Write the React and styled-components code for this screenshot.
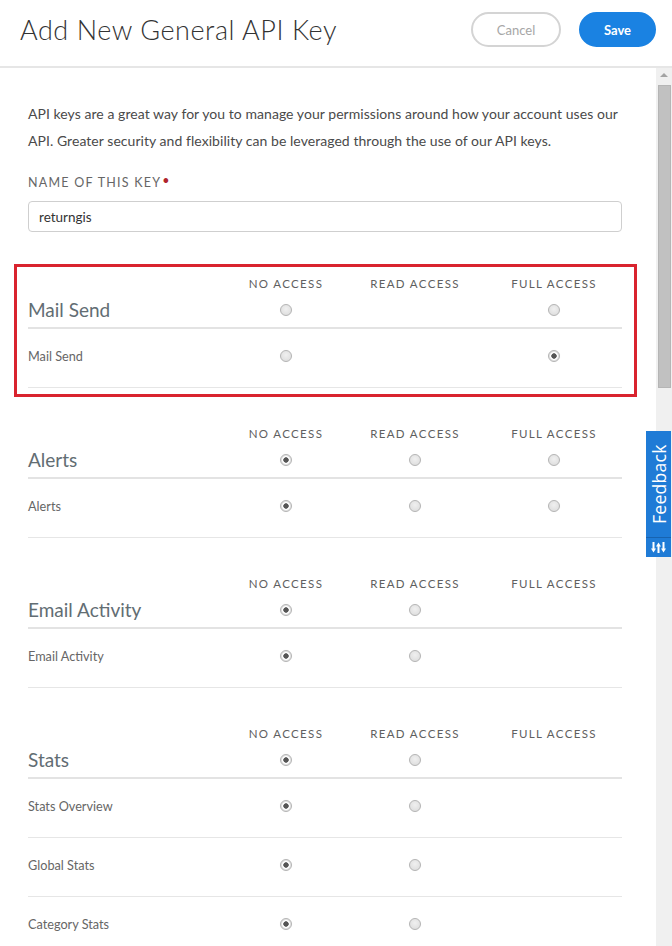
import React from "react";
import styled, { createGlobalStyle } from "styled-components";

const GlobalStyle = createGlobalStyle`
  html, body {
    margin: 0;
    padding: 0;
    background: #ffffff;
  }
  body {
    font-family: "Lato", "Open Sans", Arial, sans-serif;
    color: #4a4a4a;
  }
  * { box-sizing: border-box; }
`;

const Page = styled.div`
  position: relative;
  width: 672px;
  height: 946px;
  overflow: hidden;
  display: flex;
  flex-direction: column;
  background: #fff;
`;

const Header = styled.header`
  flex: 0 0 auto;
  height: 68px;
  display: flex;
  align-items: center;
  padding: 0 16px 7px 20px;
  border-bottom: 2px solid #e6e6e6;
`;

const Title = styled.h1`
  margin: 0;
  flex: 1;
  font-family: "Lato", sans-serif;
  font-weight: 300;
  font-size: 27px;
  color: #333;
  letter-spacing: 0.55px;
`;

const Actions = styled.div`
  display: flex;
  gap: 18px;
`;

const PillButton = styled.button`
  height: 35px;
  width: ${(p) => (p.$primary ? "77px" : "90px")};
  border-radius: 18px;
  font-family: "Lato", sans-serif;
  font-size: 13px;
  font-weight: ${(p) => (p.$primary ? 700 : 400)};
  cursor: pointer;
  border: 2px solid ${(p) => (p.$primary ? "#1a82e2" : "#d4d4d4")};
  background: ${(p) => (p.$primary ? "#1a82e2" : "#fff")};
  color: ${(p) => (p.$primary ? "#fff" : "#a6a6a6")};
`;

const Body = styled.div`
  flex: 1;
  min-height: 0;
  display: flex;
`;

const Content = styled.main`
  flex: 1;
  min-width: 0;
  overflow: hidden;
  padding: 32px 34px 0 28px;
`;

const Intro = styled.p`
  margin: 0;
  font-size: 14px;
  line-height: 27px;
  letter-spacing: 0.05px;
  color: #4a4a4a;
`;

const FieldLabel = styled.label`
  display: block;
  margin-top: 21px;
  font-size: 12.5px;
  line-height: 16px;
  font-weight: 400;
  letter-spacing: 1.25px;
  text-transform: uppercase;
  color: #666;
`;

const Required = styled.span`
  color: #b0242c;
  margin-left: 1px;
  position: relative;
  top: -2px;
`;

const TextInput = styled.input`
  display: block;
  width: 100%;
  height: 31px;
  margin-top: 10px;
  padding: 0 10px;
  border: 1px solid #cfcfcf;
  border-radius: 4px;
  font-family: "Lato", sans-serif;
  font-size: 13.5px;
  color: #333;
  outline: none;
`;

const Group = styled.section`
  position: relative;
  margin-top: ${(p) => (p.$first ? "41px" : "35px")};

  ${(p) =>
    p.$highlight &&
    `
    &::after {
      content: "";
      position: absolute;
      top: -9px;
      bottom: -9px;
      left: -14px;
      right: -15px;
      border: 3px solid #d9232e;
      pointer-events: none;
    }
  `}
`;

const Grid = styled.div`
  display: grid;
  grid-template-columns: 194px 128px 130px 1fr;
  align-items: center;
`;

const ColumnHeads = styled(Grid)`
  height: 20px;
`;

const ColumnHead = styled.div`
  text-align: center;
  font-size: 11.5px;
  font-weight: 400;
  letter-spacing: 1.35px;
  color: #606060;
  padding-left: ${(p) => (p.$shift ? "6px" : "0")};
`;

const TitleRow = styled(Grid)`
  padding: 6px 0 6px;
  border-bottom: 2px solid #e3e3e3;
`;

const GroupTitle = styled.h2`
  margin: 0;
  font-size: 19px;
  line-height: 22px;
  font-weight: 400;
  color: #626d73;
`;

const ItemRow = styled(Grid)`
  padding: 19px 0 23px;
  border-bottom: 1px solid #e6e6e6;
`;

const ItemLabel = styled.div`
  font-size: 12.7px;
  line-height: 16px;
  color: #666;
`;

const Cell = styled.div`
  display: flex;
  justify-content: center;
  padding-left: ${(p) => (p.$shift ? "6px" : "0")};
`;

const RadioDot = styled.span`
  width: 12px;
  height: 12px;
  border-radius: 50%;
  border: 1px solid #b4b4b4;
  background: ${(p) =>
    p.$checked
      ? "radial-gradient(circle, #555 0 2.4px, #fff 3px 3.6px, #e4e4e4 4.2px)"
      : "radial-gradient(circle at 50% 40%, #f0f0f0, #dadada)"};
  box-shadow: 0 0 1px rgba(0, 0, 0, 0.06);
`;

const ScrollTrack = styled.div`
  flex: 0 0 16px;
  background: #f0f0f0;
  display: flex;
  flex-direction: column;
  align-items: center;
  padding-top: 5px;
`;

const ScrollArrow = styled.div`
  width: 0;
  height: 0;
  border-left: 4px solid transparent;
  border-right: 4px solid transparent;
  border-bottom: 4px solid #a3a3a3;
`;

const ScrollThumb = styled.div`
  width: 13px;
  height: 303px;
  margin-top: 8px;
  background: #c1c1c1;
  border: 1px solid #b5b5b5;
`;

const FeedbackTab = styled.div`
  position: absolute;
  top: 431px;
  right: 1px;
  width: 25px;
  height: 126px;
  background: #1f7bd6;
  display: flex;
  flex-direction: column;
  align-items: center;
`;

const FeedbackText = styled.div`
  flex: 1;
  writing-mode: vertical-rl;
  transform: rotate(180deg);
  font-family: "Open Sans", sans-serif;
  font-size: 17.5px;
  color: #fff;
  display: flex;
  align-items: center;
  justify-content: center;
  letter-spacing: 0.3px;
`;

const FeedbackIcon = styled.div`
  flex: 0 0 20px;
  width: 100%;
  border-top: 1px solid #1763b0;
  display: flex;
  align-items: center;
  justify-content: center;
`;

const COLUMNS = ["NO ACCESS", "READ ACCESS", "FULL ACCESS"];

const GROUPS = [
  {
    title: "Mail Send",
    levels: [true, false, true],
    titleValue: null,
    items: [{ label: "Mail Send", value: 2 }],
    highlight: true,
  },
  {
    title: "Alerts",
    levels: [true, true, true],
    titleValue: 0,
    items: [{ label: "Alerts", value: 0 }],
  },
  {
    title: "Email Activity",
    levels: [true, true, false],
    titleValue: 0,
    items: [{ label: "Email Activity", value: 0 }],
  },
  {
    title: "Stats",
    levels: [true, true, false],
    titleValue: 0,
    items: [
      { label: "Stats Overview", value: 0 },
      { label: "Global Stats", value: 0 },
      { label: "Category Stats", value: 0 },
    ],
  },
];

function RadioCells({ levels, value }) {
  return levels.map((on, i) => (
    <Cell key={i} $shift={i === 2}>
      {on ? <RadioDot $checked={value === i} /> : null}
    </Cell>
  ));
}

function ArrowsIcon() {
  return (
    <svg width="15" height="11" viewBox="0 0 15 11" fill="#fff">
      <rect x="1.5" y="0" width="2" height="7" />
      <path d="M0 6.5h5L2.5 10.5z" />
      <rect x="6.5" y="4" width="2" height="7" />
      <path d="M5 4.5h5L7.5 0.5z" />
      <rect x="11.5" y="0" width="2" height="7" />
      <path d="M10 6.5h5L12.5 10.5z" />
    </svg>
  );
}

export default function App() {
  return (
    <>
      <GlobalStyle />
      <Page>
        <Header>
          <Title>Add New General API Key</Title>
          <Actions>
            <PillButton>Cancel</PillButton>
            <PillButton $primary>Save</PillButton>
          </Actions>
        </Header>
        <Body>
          <Content>
            <Intro>
              API keys are a great way for you to manage your permissions around how your
              account uses our API. Greater security and flexibility can be leveraged
              through the use of our API keys.
            </Intro>
            <FieldLabel htmlFor="key-name">
              Name of this key<Required>•</Required>
            </FieldLabel>
            <TextInput id="key-name" defaultValue="returngis" />

            {GROUPS.map((g, gi) => (
              <Group key={g.title} $first={gi === 0} $highlight={g.highlight}>
                <ColumnHeads>
                  <span />
                  {COLUMNS.map((c, i) => (
                    <ColumnHead key={c} $shift={i === 2}>
                      {c}
                    </ColumnHead>
                  ))}
                </ColumnHeads>
                <TitleRow>
                  <GroupTitle>{g.title}</GroupTitle>
                  <RadioCells levels={g.levels} value={g.titleValue} />
                </TitleRow>
                {g.items.map((it) => (
                  <ItemRow key={it.label}>
                    <ItemLabel>{it.label}</ItemLabel>
                    <RadioCells levels={g.levels} value={it.value} />
                  </ItemRow>
                ))}
              </Group>
            ))}
          </Content>
          <ScrollTrack>
            <ScrollArrow />
            <ScrollThumb />
          </ScrollTrack>
        </Body>
        <FeedbackTab>
          <FeedbackText>Feedback</FeedbackText>
          <FeedbackIcon>
            <ArrowsIcon />
          </FeedbackIcon>
        </FeedbackTab>
      </Page>
    </>
  );
}
